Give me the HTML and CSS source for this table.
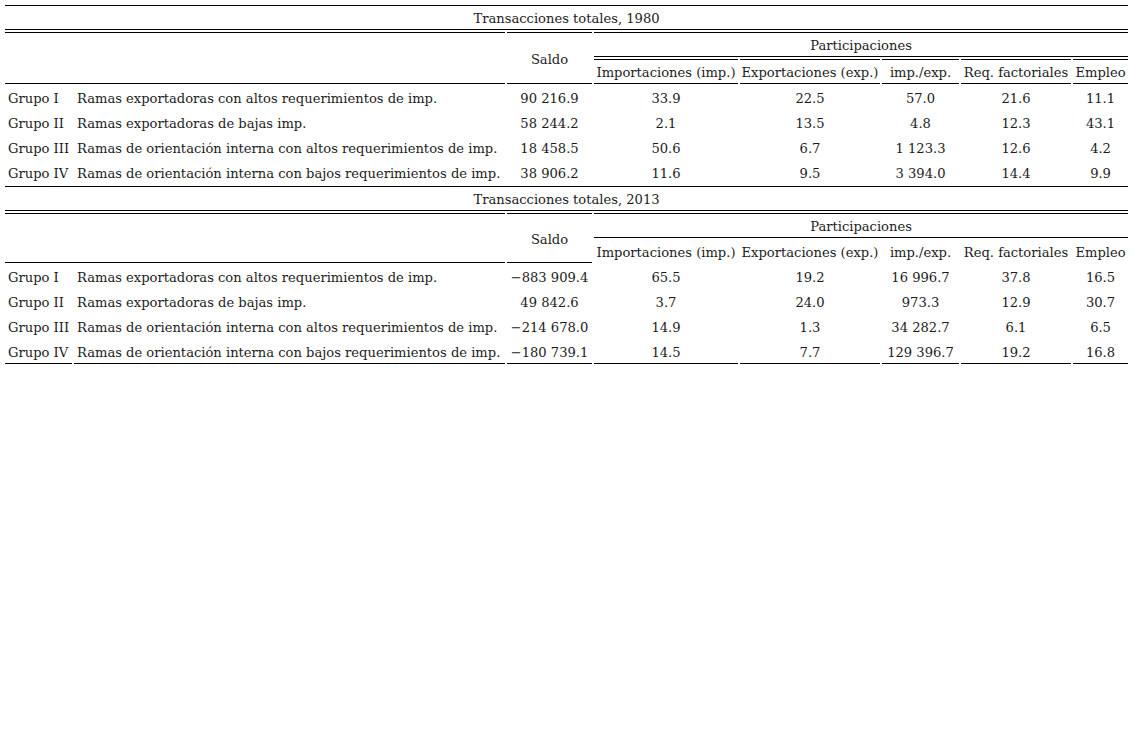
FILE: index.html
```html
<!DOCTYPE html>
<html lang="es">
<head>
<meta charset="utf-8">
<title>Transacciones totales</title>
<link rel="stylesheet" href="styles.css">
</head>
<body>
<table class="tbl">
  <colgroup>
    <col class="c-grp">
    <col class="c-rama">
    <col class="c-saldo">
    <col class="c-imp">
    <col class="c-exp">
    <col class="c-ratio">
    <col class="c-req">
    <col class="c-emp">
  </colgroup>
  <tbody class="sec sec-1980">
    <tr><td class="title" colspan="8">Transacciones totales, 1980</td></tr>
    <tr>
      <td class="blank top bottom" colspan="2" rowspan="2"></td>
      <td class="saldo top bottom" rowspan="2">Saldo</td>
      <td class="part top bottom" colspan="5">Participaciones</td>
    </tr>
    <tr class="sub">
      <td class="top bottom">Importaciones (imp.)</td>
      <td class="top bottom">Exportaciones (exp.)</td>
      <td class="top bottom">imp./exp.</td>
      <td class="top bottom">Req. factoriales</td>
      <td class="top bottom">Empleo</td>
    </tr>
    <tr class="row"><td class="grp">Grupo I</td><td class="rama">Ramas exportadoras con altos requerimientos de imp.</td><td>90 216.9</td><td>33.9</td><td>22.5</td><td>57.0</td><td>21.6</td><td>11.1</td></tr>
    <tr class="row"><td class="grp">Grupo II</td><td class="rama">Ramas exportadoras de bajas imp.</td><td>58 244.2</td><td>2.1</td><td>13.5</td><td>4.8</td><td>12.3</td><td>43.1</td></tr>
    <tr class="row"><td class="grp">Grupo III</td><td class="rama">Ramas de orientación interna con altos requerimientos de imp.</td><td>18 458.5</td><td>50.6</td><td>6.7</td><td>1 123.3</td><td>12.6</td><td>4.2</td></tr>
    <tr class="row"><td class="grp">Grupo IV</td><td class="rama">Ramas de orientación interna con bajos requerimientos de imp.</td><td>38 906.2</td><td>11.6</td><td>9.5</td><td>3 394.0</td><td>14.4</td><td>9.9</td></tr>
  </tbody>
  <tbody class="sec sec-2013">
    <tr><td class="title" colspan="8">Transacciones totales, 2013</td></tr>
    <tr>
      <td class="blank top bottom" colspan="2" rowspan="2"></td>
      <td class="saldo top bottom" rowspan="2">Saldo</td>
      <td class="part top bottom" colspan="5">Participaciones</td>
    </tr>
    <tr class="sub">
      <td>Importaciones (imp.)</td>
      <td>Exportaciones (exp.)</td>
      <td>imp./exp.</td>
      <td>Req. factoriales</td>
      <td>Empleo</td>
    </tr>
    <tr class="row"><td class="grp">Grupo I</td><td class="rama">Ramas exportadoras con altos requerimientos de imp.</td><td>−883 909.4</td><td>65.5</td><td>19.2</td><td>16 996.7</td><td>37.8</td><td>16.5</td></tr>
    <tr class="row"><td class="grp">Grupo II</td><td class="rama">Ramas exportadoras de bajas imp.</td><td>49 842.6</td><td>3.7</td><td>24.0</td><td>973.3</td><td>12.9</td><td>30.7</td></tr>
    <tr class="row"><td class="grp">Grupo III</td><td class="rama">Ramas de orientación interna con altos requerimientos de imp.</td><td>−214 678.0</td><td>14.9</td><td>1.3</td><td>34 282.7</td><td>6.1</td><td>6.5</td></tr>
    <tr class="row last"><td class="grp">Grupo IV</td><td class="rama">Ramas de orientación interna con bajos requerimientos de imp.</td><td>−180 739.1</td><td>14.5</td><td>7.7</td><td>129 396.7</td><td>19.2</td><td>16.8</td></tr>
  </tbody>
</table>
</body>
</html>
```

FILE: styles.css
```css
html, body {
  background: #ffffff;
}

body {
  margin: 3px;
  font-family: "DejaVu Serif", "Liberation Serif", serif;
  font-size: 13.1px;
  color: #1c1c1c;
}

.tbl {
  width: 1127px;
  table-layout: fixed;
  border-collapse: separate;
  border-spacing: 2px;
}

.c-grp { width: 67px; }
.c-rama { width: 431px; }
.c-saldo { width: 85px; }
.c-imp { width: 144px; }
.c-exp { width: 140px; }
.c-ratio { width: 77px; }
.c-req { width: 110px; }
.c-emp { width: 55px; }

.tbl td {
  padding: 5px 0 3px;
  line-height: 15px;
  text-align: center;
  vertical-align: middle;
  white-space: nowrap;
  overflow: visible;
}

.tbl td.title {
  border-top: 1px solid #000;
  border-bottom: 1px solid #000;
}

.tbl td.top {
  border-top: 1px solid #000;
}

.tbl td.bottom {
  border-bottom: 1px solid #000;
}

.tbl td.grp,
.tbl td.rama {
  text-align: left;
  padding-left: 3px;
}

.tbl tr.last td {
  border-bottom: 1px solid #000;
}
```
